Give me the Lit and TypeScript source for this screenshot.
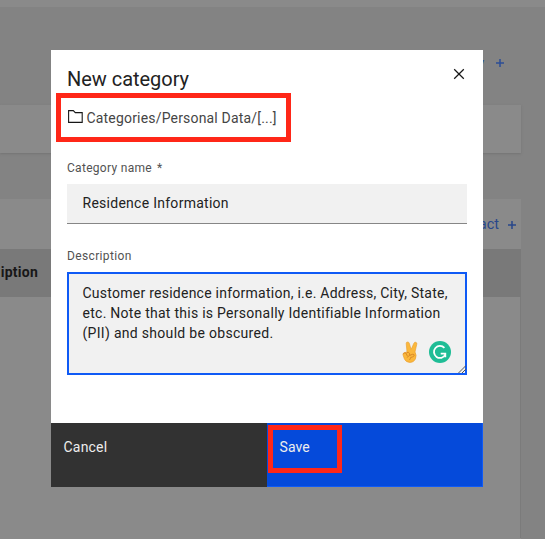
import { LitElement, html, css } from "lit";
import { customElement, property } from "lit/decorators.js";

@customElement("page-backdrop")
class PageBackdrop extends LitElement {
  static styles = css`
    :host { display: block; height: 539px; background: #838383; overflow: hidden; font: 14px/20px Roboto, sans-serif; }
    .bar { height: 7px; background: #8a8a8a; }
    .heading { height: 98px; box-sizing: border-box; padding: 46px 40px 0 0; display: flex; justify-content: flex-end; gap: 11px; color: #2c4e96; }
    .plus { width: 10px; height: 10px; fill: none; stroke: currentColor; stroke-width: 1.5; display: block; margin-top: 5px; }
    .tile { width: 521px; height: 48px; background: #8a8a8a; box-shadow: 0 1px 2px #747474; }
    .panel { width: 521px; margin-top: 46px; height: 340px; background: #8a8a8a; }
    .tools { height: 50px; box-sizing: border-box; padding: 16px 4px 0 0; display: flex; justify-content: flex-end; gap: 8px; color: #28478b; }
    .tools .plus { margin-top: 5px; }
    .tools span { font-size: 14.5px; }
    .head { height: 48px; background: #797979; line-height: 46px; font-weight: 700; color: #171717; letter-spacing: 0.25px; }
    .head span { display: block; width: 38px; direction: rtl; white-space: nowrap; }
    .rows { height: 241px; border-right: 1px solid #7b7b7b; box-sizing: border-box; }
  `;
  plus() {
    return html`<svg class="plus" viewBox="0 0 10 10"><path d="M5 1v8M1 5h8" /></svg>`;
  }
  render() {
    return html`
      <div class="bar"></div>
      <div class="heading"><span>y</span>${this.plus()}</div>
      <div class="tile"></div>
      <div class="panel">
        <div class="tools"><span>act</span>${this.plus()}</div>
        <div class="head"><span>iption</span></div>
        <div class="rows"></div>
      </div>
    `;
  }
}

@customElement("category-dialog")
class CategoryDialog extends LitElement {
  static styles = css`
    :host { display: flex; flex-direction: column; width: 432px; height: 437px; background: #fff; color: #222; font: 14px/20px Roboto, sans-serif; }
    svg { display: block; fill: none; }
    .body { flex: 1; padding: 0 16px; }
    .top { display: flex; justify-content: space-between; height: 43px; }
    h1 { margin: 16px 0 0; font-size: 20px; line-height: 26px; font-weight: 400; letter-spacing: -0.03px; white-space: nowrap; }
    .close { width: 12px; height: 12px; margin: 18px 2px 0 0; stroke: #171717; stroke-width: 1.25; }
    .path { display: flex; align-items: center; gap: 4px; box-sizing: border-box; width: 235px; height: 49px; margin-left: -11px; padding-left: 7px; border: 5px solid #ff2718; color: #454545; white-space: nowrap; }
    .folder { width: 15px; height: 13px; margin-top: -3px; stroke: #171717; stroke-width: 1.1; }
    .path span { letter-spacing: 0.18px; margin-left: -0.5px; }
    label { display: flex; gap: 5px; font-size: 12px; line-height: 16px; color: #525252; letter-spacing: 0.3px; }
    .first { margin-top: 18px; }
    .second { margin-top: 24px; letter-spacing: 0.36px; }
    .input { height: 40px; margin-top: 8px; box-sizing: border-box; padding: 9px 15.5px; background: #f1f1f1; border-bottom: 1px solid #868686; letter-spacing: 0.27px; }
    .area { position: relative; height: 103px; margin-top: 8px; box-sizing: border-box; padding: 9px 13.5px; background: #f1f1f1; border: 2px solid #0f5af5; white-space: nowrap; }
    .l1 { letter-spacing: 0.25px; }
    .l2 { letter-spacing: 0.27px; }
    .l3 { letter-spacing: 0.3px; }
    .extras { position: absolute; right: 14px; bottom: 10px; display: flex; gap: 8px; align-items: center; }
    .hand { width: 20px; height: 22px; }
    .badge { width: 22px; height: 22px; }
    .grip { position: absolute; right: -1px; bottom: 0; width: 8px; height: 8px; stroke: #555; }
    .actions { display: flex; height: 64px; color: #ededed; }
    .cancel, .save { width: 216px; box-sizing: border-box; }
    .cancel { background: #323232; padding: 14px 12.5px; letter-spacing: 0.2px; }
    .save { background: #054ada; padding: 3px 0 0 1px; border-right: 1px solid #0f5af5; border-bottom: 1px solid #0f5af5; }
    .mark { box-sizing: border-box; width: 74px; height: 48px; margin-top: -1px; border: 5px solid #ff2718; padding: 7px 6.5px; letter-spacing: 0.1px; }
  `;
  @property() heading = "New category";
  render() {
    return html`
      <div class="body">
        <div class="top">
          <h1>${this.heading}</h1>
          <svg class="close" viewBox="0 0 12 12"><path d="M1.2 1.2l9.6 9.6M10.8 1.2L1.2 10.8" /></svg>
        </div>
        <div class="path">
          <svg class="folder" viewBox="0 0 15 13"><path d="M.6 .6h4.7l2 2h6.9v9.8H.6z" /></svg>
          <span>Categories/Personal Data/[...]</span>
        </div>
        <label class="first"><span>Category name</span><span>*</span></label>
        <div class="input">Residence Information</div>
        <label class="second">Description</label>
        <div class="area">
          <div class="l1">Customer residence information, i.e. Address, City, State,</div>
          <div class="l2">etc. Note that this is Personally Identifiable Information</div>
          <div class="l3">(PII) and should be obscured.</div>
          <div class="extras">
            <svg class="hand" viewBox="0 0 20 22">
              <path d="M6 11L5.2 2.5Q5.1 1 6.6 1T8.4 2.5L10.1 8.5 12.9 2.2Q13.6.8 14.9 1.3T15.8 3.1L14 11Q16 14 14.4 18.1 12.8 21.5 9 21.5 4.8 21.3 3.4 18L2.1 14.2Q1.6 12.2 3 11.8z" fill="#fbb83c" stroke="#e79a2b" stroke-width=".6" />
              <path d="M2.3 13.2Q3.5 10.8 5 12.2L6.3 15M5.6 12Q7.3 10.2 8.4 12.2L8.8 14.3M5.8 16.5Q8 14.4 11.3 13.3 13.5 12.9 13.2 14.7 12.2 16 9.5 16.6 9.5 18 8.4 19" stroke="#d58427" stroke-width=".9" />
            </svg>
            <svg class="badge" viewBox="0 0 22 22">
              <circle cx="11" cy="11" r="11" fill="#1fbd96" />
              <path d="M15.4 6.9A6 6 0 1 0 16.3 13.7" stroke="#fff" stroke-width="1.8" />
              <path d="M11.7 12.6H16.3V16.3" stroke="#fff" stroke-width="1.8" />
            </svg>
          </div>
          <svg class="grip" viewBox="0 0 8 8"><path d="M.5 8L8 .5M4 8L8 4" /></svg>
        </div>
      </div>
      <div class="actions">
        <div class="cancel">Cancel</div>
        <div class="save"><div class="mark">Save</div></div>
      </div>
    `;
  }
}

@customElement("app-root")
class AppRoot extends LitElement {
  static styles = css`
    :host { display: block; position: relative; width: 545px; height: 539px; overflow: hidden; }
    .dialog { position: absolute; left: 51px; top: 50px; }
  `;
  render() {
    return html`<page-backdrop></page-backdrop><category-dialog class="dialog"></category-dialog>`;
  }
}
